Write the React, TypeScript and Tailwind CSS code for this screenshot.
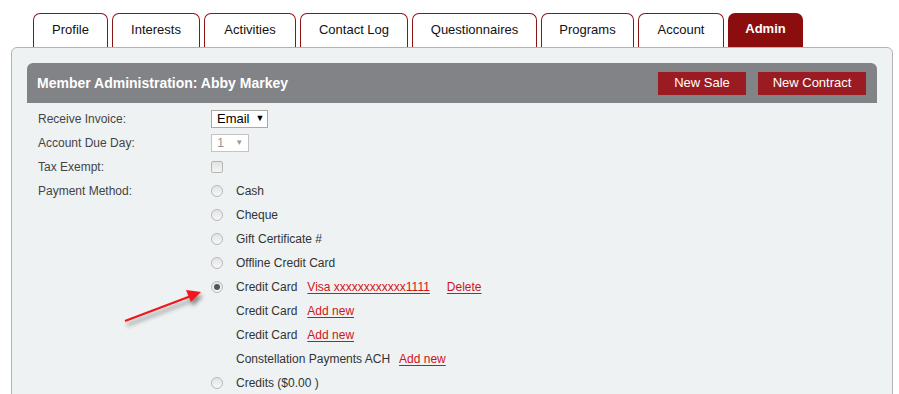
import React from "react";

const tabs: { label: string; w: string; active?: boolean }[] = [
  { label: "Profile", w: "w-[75px]" },
  { label: "Interests", w: "w-[88px]" },
  { label: "Activities", w: "w-[92px]" },
  { label: "Contact Log", w: "w-[108px]" },
  { label: "Questionnaires", w: "w-[125px]" },
  { label: "Programs", w: "w-[93px]" },
  { label: "Account", w: "w-[86px]" },
  { label: "Admin", w: "w-[75px]", active: true },
];

const Radio = ({ checked }: { checked?: boolean }) => (
  <span className="w-[12px] h-[12px] rounded-full border border-[#b9b9b9] bg-gradient-to-b from-[#e4e4e4] to-[#f7f7f7] flex items-center justify-center shrink-0">
    {checked && <span className="w-[6px] h-[6px] rounded-full bg-[#555]" />}
  </span>
);

const Link = ({ children }: { children: React.ReactNode }) => (
  <a href="#" className="text-[#d0121b] underline underline-offset-2">
    {children}
  </a>
);

const Row = ({ label, children }: { label?: string; children?: React.ReactNode }) => (
  <div className="h-[24px] flex items-center">
    <div className="w-[184px] pl-[11px] text-[#444]">{label}</div>
    <div className="flex items-center">{children}</div>
  </div>
);

const Option = ({ radio, checked, children }: { radio?: boolean; checked?: boolean; children: React.ReactNode }) => (
  <div className="flex items-center">
    <span className="w-[25px] flex">{radio && <Radio checked={checked} />}</span>
    {children}
  </div>
);

export default function App() {
  return (
    <div className="w-[899px] h-[394px] bg-white overflow-hidden relative font-['Liberation_Sans',Arial,sans-serif]">
      <div className="flex gap-[4px] pl-[33px] pt-[13px]">
        {tabs.map((t) => (
          <div
            key={t.label}
            className={`${t.w} h-[34px] rounded-t-[7px] flex items-center justify-center pb-[2px] text-[13px] ${
              t.active
                ? "bg-[#8c0d0d] text-white font-bold"
                : "bg-white text-[#111] border border-b-0 border-[#8b1414]"
            }`}
          >
            {t.label}
          </div>
        ))}
      </div>

      <div className="ml-[11px] w-[882px] h-[360px] border border-[#b3b3b3] rounded-[6px] bg-[#eef2f3] pt-[15px] px-[15px]">
        <div className="w-[850px] h-[40px] bg-[#828387] rounded-t-[6px] flex items-center justify-between pl-[10px] pr-[11px]">
          <span className="text-white font-bold text-[14px]">Member Administration: Abby Markey</span>
          <div className="flex gap-[12px]">
            <button className="w-[88px] h-[23px] bg-[#9b1b22] text-white text-[13px]">New Sale</button>
            <button className="w-[108px] h-[23px] bg-[#9b1b22] text-white text-[13px]">New Contract</button>
          </div>
        </div>

        <div className="pt-[4px] text-[12px] text-[#333]">
          <Row label="Receive Invoice:">
            <span className="h-[18px] w-[57px] border border-[#a9a9a9] bg-white flex items-center pl-[5px] text-[13px] text-black">
              Email <span className="text-[9px] ml-[6px]">▼</span>
            </span>
          </Row>
          <Row label="Account Due Day:">
            <span className="h-[18px] w-[38px] border border-[#c4c4c4] bg-white flex items-center pl-[5px] text-[13px] text-[#999]">
              1 <span className="text-[8px] ml-[11px]">▼</span>
            </span>
          </Row>
          <Row label="Tax Exempt:">
            <span className="w-[12px] h-[12px] rounded-[2px] border border-[#b5b5b5] bg-gradient-to-b from-[#e2e2e2] to-[#f5f5f5]" />
          </Row>
          <Row label="Payment Method:">
            <Option radio>Cash</Option>
          </Row>
          <Row>
            <Option radio>Cheque</Option>
          </Row>
          <Row>
            <Option radio>Gift Certificate #</Option>
          </Row>
          <Row>
            <Option radio>Offline Credit Card</Option>
          </Row>
          <Row>
            <Option radio checked>
              <span className="mr-[10px]">Credit Card</span>
              <Link>Visa xxxxxxxxxxxx1111</Link>
              <span className="ml-[17px]">
                <Link>Delete</Link>
              </span>
            </Option>
          </Row>
          <Row>
            <Option>
              <span className="mr-[10px]">Credit Card</span>
              <Link>Add new</Link>
            </Option>
          </Row>
          <Row>
            <Option>
              <span className="mr-[10px]">Credit Card</span>
              <Link>Add new</Link>
            </Option>
          </Row>
          <Row>
            <Option>
              <span className="mr-[9px]">Constellation Payments ACH</span>
              <Link>Add new</Link>
            </Option>
          </Row>
          <Row>
            <Option radio>Credits ($0.00 )</Option>
          </Row>
        </div>
      </div>

      {/* annotation arrow */}
      <svg className="absolute left-[115px] top-[280px]" width="100" height="55" viewBox="0 0 100 55">
        <defs>
          <filter id="sh" x="-20%" y="-50%" width="140%" height="200%">
            <feDropShadow dx="2" dy="4" stdDeviation="2" floodColor="#000" floodOpacity="0.45" />
          </filter>
        </defs>
        <g filter="url(#sh)">
          <line x1="10" y1="41" x2="76" y2="16" stroke="#f0141a" strokeWidth="2.2" />
          <polygon points="86,12 71,10 76,22" fill="#f0141a" />
        </g>
      </svg>
    </div>
  );
}
